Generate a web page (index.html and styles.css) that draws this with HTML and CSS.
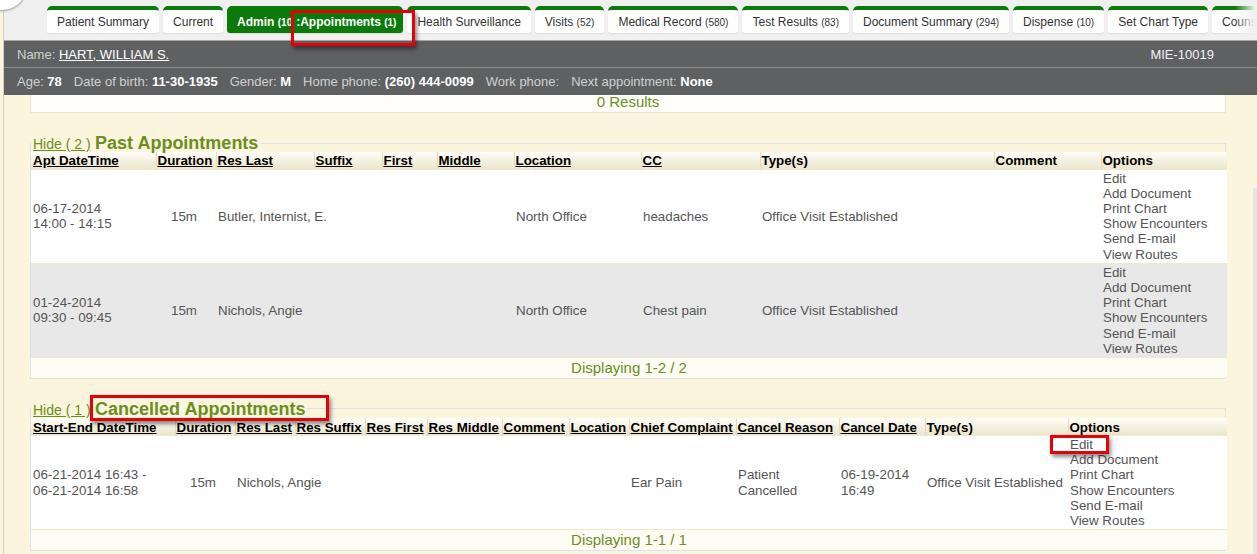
FILE: index.html
```html
<!DOCTYPE html>
<html lang="en">
<head>
<meta charset="utf-8">
<title>Appointments</title>
<link rel="stylesheet" href="styles.css">
</head>
<body>
<div class="corner"></div>
<div class="page">
  <nav class="tabs">
    <a class="tab">Patient Summary</a>
    <a class="tab">Current</a>
    <a class="tab active">Admin <span class="cnt">(10</span><span class="mark mark-tab">:Appointments <span class="cnt">(1)</span></span></a>
    <a class="tab">Health Surveillance</a>
    <a class="tab">Visits <span class="cnt">(52)</span></a>
    <a class="tab">Medical Record <span class="cnt">(580)</span></a>
    <a class="tab">Test Results <span class="cnt">(83)</span></a>
    <a class="tab">Document Summary <span class="cnt">(294)</span></a>
    <a class="tab">Dispense <span class="cnt">(10)</span></a>
    <a class="tab">Set Chart Type</a>
    <a class="tab last">Counseling</a>
  </nav>

  <header class="patient">
    <div class="prow">
      <span>Name: <a class="pname">HART, WILLIAM S.</a></span>
      <span class="mrn">MIE-10019</span>
    </div>
    <div class="prow">
      <span>Age: <b>78</b></span>
      <span>Date of birth: <b>11-30-1935</b></span>
      <span>Gender: <b>M</b></span>
      <span>Home phone: <b>(260) 444-0099</b></span>
      <span>Work phone:</span>
      <span>Next appointment: <b>None</b></span>
    </div>
  </header>

  <main class="content">
    <div class="results">0 Results</div>

    <fieldset class="appts">
      <legend><a class="hide">Hide ( 2 )</a> <span class="title">Past Appointments</span></legend>
      <table class="grid">
        <colgroup>
          <col class="p-dt"><col class="p-dur"><col class="p-last"><col class="p-suf"><col class="p-first"><col class="p-mid"><col class="p-loc"><col class="p-cc"><col class="p-type"><col class="p-com"><col class="p-opt">
        </colgroup>
        <thead>
          <tr>
            <th><a>Apt DateTime</a></th>
            <th><a>Duration</a></th>
            <th><a>Res Last</a></th>
            <th><a>Suffix</a></th>
            <th><a>First</a></th>
            <th><a>Middle</a></th>
            <th><a>Location</a></th>
            <th><a>CC</a></th>
            <th>Type(s)</th>
            <th>Comment</th>
            <th>Options</th>
          </tr>
        </thead>
        <tbody>
          <tr>
            <td>06-17-2014<br>14:00 - 14:15</td>
            <td class="c">15m</td>
            <td class="nw">Butler, Internist, E.</td>
            <td></td><td></td><td></td>
            <td>North Office</td>
            <td>headaches</td>
            <td>Office Visit Established</td>
            <td></td>
            <td class="opts"><a>Edit</a><a>Add Document</a><a>Print Chart</a><a>Show Encounters</a><a>Send E-mail</a><a>View Routes</a></td>
          </tr>
          <tr class="alt">
            <td>01-24-2014<br>09:30 - 09:45</td>
            <td class="c">15m</td>
            <td class="nw">Nichols, Angie</td>
            <td></td><td></td><td></td>
            <td>North Office</td>
            <td>Chest pain</td>
            <td>Office Visit Established</td>
            <td></td>
            <td class="opts"><a>Edit</a><a>Add Document</a><a>Print Chart</a><a>Show Encounters</a><a>Send E-mail</a><a>View Routes</a></td>
          </tr>
        </tbody>
        <tfoot>
          <tr><td colspan="11">Displaying 1-2 / 2</td></tr>
        </tfoot>
      </table>
    </fieldset>

    <fieldset class="appts cancelled">
      <legend><a class="hide">Hide ( 1 )</a> <span class="title mark mark-title">Cancelled Appointments</span></legend>
      <table class="grid">
        <colgroup>
          <col class="c-dt"><col class="c-dur"><col class="c-last"><col class="c-suf"><col class="c-first"><col class="c-mid"><col class="c-com"><col class="c-loc"><col class="c-cc"><col class="c-reason"><col class="c-date"><col class="c-type"><col class="c-opt">
        </colgroup>
        <thead>
          <tr>
            <th><a>Start-End DateTime</a></th>
            <th><a>Duration</a></th>
            <th><a>Res Last</a></th>
            <th><a>Res Suffix</a></th>
            <th><a>Res First</a></th>
            <th><a>Res Middle</a></th>
            <th><a>Comment</a></th>
            <th><a>Location</a></th>
            <th><a>Chief Complaint</a></th>
            <th><a>Cancel Reason</a></th>
            <th><a>Cancel Date</a></th>
            <th>Type(s)</th>
            <th>Options</th>
          </tr>
        </thead>
        <tbody>
          <tr>
            <td>06-21-2014 16:43 -<br>06-21-2014 16:58</td>
            <td class="c">15m</td>
            <td class="nw">Nichols, Angie</td>
            <td></td><td></td><td></td><td></td><td></td>
            <td>Ear Pain</td>
            <td>Patient<br>Cancelled</td>
            <td>06-19-2014<br>16:49</td>
            <td class="nw">Office Visit Established</td>
            <td class="opts"><a><span class="mark mark-edit">Edit</span></a><a>Add Document</a><a>Print Chart</a><a>Show Encounters</a><a>Send E-mail</a><a>View Routes</a></td>
          </tr>
        </tbody>
        <tfoot>
          <tr><td colspan="13">Displaying 1-1 / 1</td></tr>
        </tfoot>
      </table>
    </fieldset>
  </main>
</div>
<div class="scrollbar"></div>
</body>
</html>
```

FILE: styles.css
```css
* { box-sizing: border-box; }

html, body {
  margin: 0;
  padding: 0;
}

body {
  width: 1257px;
  height: 554px;
  overflow: hidden;
  background: #faf5dc;
  font-family: "Liberation Sans", Arial, sans-serif;
  position: relative;
}

.corner {
  position: absolute;
  left: -24px;
  top: -30px;
  width: 50px;
  height: 41px;
  border-radius: 50%;
  background: #fff;
  border: 1px solid #b9b9b9;
  box-shadow: 0 1px 2px rgba(0, 0, 0, 0.15);
  z-index: 5;
}

.scrollbar {
  position: absolute;
  right: 0;
  top: 188px;
  bottom: 0;
  width: 4px;
  background: #e4e4e4;
}

.page {
  margin-left: 3px;
  border-left: 1px solid #d4cfb6;
  min-height: 554px;
}

/* ---------- tabs ---------- */
.tabs {
  position: relative;
  height: 40px;
  background: #f0f0f0;
  display: flex;
  align-items: flex-start;
  gap: 4px;
  padding: 6px 0 0 43px;
  white-space: nowrap;
}

.tabs::after {
  content: "";
  position: absolute;
  right: 0;
  top: 0;
  width: 22px;
  height: 40px;
  background: linear-gradient(to right, rgba(240, 240, 240, 0), #f0f0f0 90%);
}

.tab {
  flex: none;
  height: 27px;
  padding: 1px 10px 0;
  border-top: 4px solid #0b7a0b;
  border-radius: 5px 5px 3px 3px;
  background: #fff;
  box-shadow: 0 1px 1px rgba(0, 0, 0, 0.08);
  color: #333;
  font-size: 12px;
  line-height: 23px;
}

.tab.last {
  flex: 1 1 auto;
  min-width: 0;
  overflow: hidden;
}

.tab.active {
  padding-right: 7px;
  background: #0b7a0b;
  color: #fff;
  font-weight: bold;
}

.cnt { font-size: 10px; }

/* ---------- patient header ---------- */
.patient {
  background: #5f6062;
  border-top: 1px solid #a7a7a7;
  color: #d0d0d0;
  font-size: 13px;
}

.prow {
  height: 26px;
  display: flex;
  align-items: center;
  gap: 12px;
  padding: 0 43px 0 13px;
}

.prow + .prow {
  height: 28px;
  border-top: 1px solid #8d8d8d;
}

.prow b { color: #fff; }

.pname {
  color: #fff;
  text-decoration: underline;
}

.mrn {
  margin-left: auto;
  color: #f3f3f3;
}

/* ---------- content ---------- */
.content {
  padding: 0 31px 0 26px;
}

.results {
  height: 18px;
  background: #fffefb;
  border: 1px solid #e8e5d5;
  border-top: none;
  color: #6b8e23;
  font-size: 15px;
  line-height: 14px;
  text-align: center;
}

.appts {
  margin: 21px 0 0;
  padding: 0;
  min-width: 0;
  border: 1px solid #dfe2e3;
}

.appts legend {
  height: 18px;
  padding: 0 2px;
  line-height: 18px;
  white-space: nowrap;
}

.hide {
  color: #6b8e23;
  font-size: 14px;
  line-height: 18px;
  text-decoration: underline;
}

.title {
  color: #6b8e23;
  font-size: 18px;
  line-height: 18px;
  font-weight: bold;
}

/* ---------- grid ---------- */
.grid {
  width: 100%;
  border-collapse: collapse;
  table-layout: fixed;
  font-size: 13.33px;
  color: #555;
}

.grid th {
  height: 17px;
  padding: 0 3px 0 1px;
  line-height: 16px;
  text-align: left;
  vertical-align: bottom;
  color: #000;
  font-weight: bold;
  white-space: nowrap;
  overflow: hidden;
  background: linear-gradient(#fefdf9, #ebe5ca);
  border-left: 1px solid #e3ddc2;
}

.cancelled .grid th {
  padding-top: 3px;
  line-height: 14px;
}

.grid th:first-child {
  border-left: none;
  padding-left: 2px;
}

.grid th a {
  color: #000;
  text-decoration: underline;
}

.grid tbody td {
  padding: 1px 2px 1px 2px;
  line-height: 15.2px;
  vertical-align: middle;
  background: #fff;
  border-top: 1px solid #efeacd;
}

.grid tbody tr.alt td { background: #e8e8e8; }

.grid td.c {
  text-align: center;
  padding-right: 6px;
}

.grid td.nw { white-space: nowrap; }

.opts a {
  display: block;
  color: #555;
}

.grid tfoot td {
  height: 20px;
  background: #fdfcf5;
  border-top: 1px solid #efeac8;
  color: #6b8e23;
  font-size: 15px;
  line-height: 18px;
  text-align: center;
}

/* column widths: past appointments */
.p-dt { width: 125px; }
.p-dur { width: 60px; }
.p-last { width: 98px; }
.p-suf { width: 68px; }
.p-first { width: 55px; }
.p-mid { width: 77px; }
.p-loc { width: 127px; }
.p-cc { width: 119px; }
.p-type { width: 234px; }
.p-com { width: 107px; }
.p-opt { width: 126px; }

/* column widths: cancelled appointments */
.c-dt { width: 144px; }
.c-dur { width: 60px; }
.c-last { width: 60px; }
.c-suf { width: 70px; }
.c-first { width: 62px; }
.c-mid { width: 75px; }
.c-com { width: 67px; }
.c-loc { width: 60px; }
.c-cc { width: 107px; }
.c-reason { width: 103px; }
.c-date { width: 86px; }
.c-type { width: 143px; }
.c-opt { width: 159px; }

/* ---------- red annotation boxes ---------- */
.mark { position: relative; }

.mark-tab { margin-left: 4px; }

.mark::after {
  content: "";
  position: absolute;
  border: 3px solid #e5000a;
  box-shadow: 2px 3px 4px rgba(0, 0, 0, 0.45);
  pointer-events: none;
  z-index: 4;
}

.mark-tab::after {
  left: -5px;
  right: -19px;
  top: -5px;
  bottom: -17px;
}

.mark-title::after {
  left: -5px;
  right: -24px;
  top: -4px;
  bottom: -2px;
}

.mark-edit::after {
  left: -20px;
  right: -16px;
  top: -2px;
  bottom: -2px;
}
```
